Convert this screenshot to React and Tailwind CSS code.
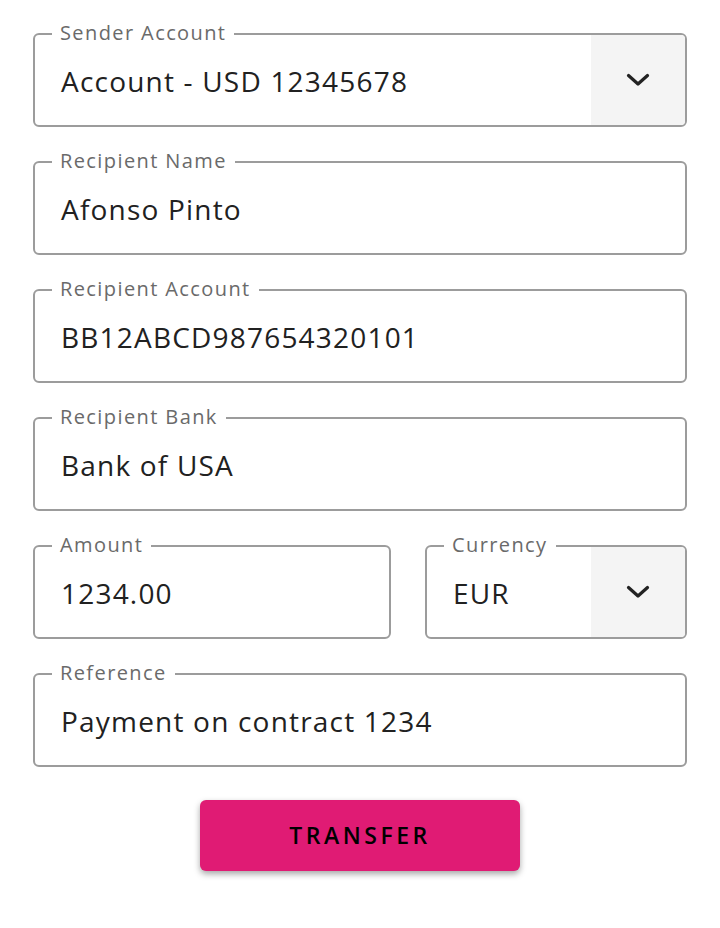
import React from 'react';

const Chevron = () => (
  <svg width="24" height="14" viewBox="0 0 24 14" fill="none">
    <path d="M2.5 2.5 L12 11 L21.5 2.5" stroke="#222" strokeWidth="3.2" strokeLinecap="round" strokeLinejoin="round" />
  </svg>
);

const Field = ({ label, value, select, className = '' }) => (
  <div className={`relative h-[94px] rounded-md border-2 border-[#9c9c9c] flex items-stretch ${className}`}>
    <span className="absolute -top-[16px] left-[17px] bg-white px-[8px] text-[20px] leading-[28px] tracking-[1.4px] text-[#6a6a6a]">
      {label}
    </span>
    <div className="flex-1 flex items-center pl-[26px] pt-[2px] text-[28px] tracking-[1.2px] text-[#212121]">{value}</div>
    {select && (
      <div className="w-[94px] bg-[#f4f4f4] rounded-r-[4px] flex items-center justify-center">
        <Chevron />
      </div>
    )}
  </div>
);

export default function App() {
  return (
    <div className="min-h-[928px] bg-white px-[33px] pt-[33px] font-['Open_Sans',sans-serif]">
      <div className="flex flex-col gap-[34px]">
        <Field label="Sender Account" value="Account - USD 12345678" select />
        <Field label="Recipient Name" value="Afonso Pinto" />
        <Field label="Recipient Account" value="BB12ABCD987654320101" />
        <Field label="Recipient Bank" value="Bank of USA" />
        <div className="flex gap-[34px]">
          <Field label="Amount" value="1234.00" className="w-[358px]" />
          <Field label="Currency" value="EUR" select className="flex-1" />
        </div>
        <Field label="Reference" value="Payment on contract 1234" />
      </div>
      <div className="flex justify-center pt-[33px]">
        <button className="w-[320px] h-[71px] rounded-md bg-[#e01b74] shadow-[0_3px_6px_rgba(0,0,0,0.35)] text-[23px] font-semibold tracking-[3.5px] text-black">
          TRANSFER
        </button>
      </div>
    </div>
  );
}
